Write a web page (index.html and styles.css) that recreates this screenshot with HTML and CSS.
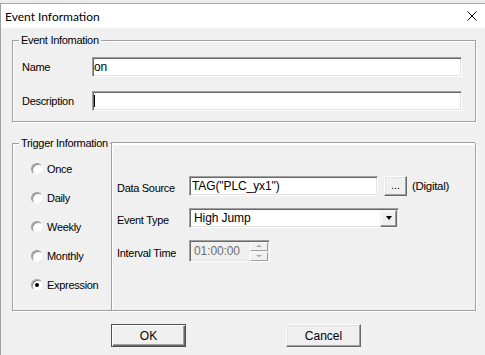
FILE: index.html
```html
<!DOCTYPE html>
<html>
<head>
<meta charset="utf-8">
<link rel="stylesheet" href="styles.css">
</head>
<body>
<div class="topstrip"></div>
<div class="window">
  <div class="titlebar">
    <span class="title">Event Information</span>
    <svg class="close" width="10" height="10" viewBox="0 0 10 10"><path d="M0.5 0.5L9.5 9.5M9.5 0.5L0.5 9.5" stroke="#000" stroke-width="1" fill="none"/></svg>
  </div>
  <div class="client">
    <fieldset class="group group-event">
      <legend>Event Infomation</legend>
      <div class="ev-rows">
        <div class="ev-row"><label>Name</label><div class="edit wide">on</div></div>
        <div class="ev-row"><label>Description</label><div class="edit wide"><span class="caret"></span></div></div>
      </div>
    </fieldset>
    <fieldset class="group group-trigger">
      <legend>Trigger Information</legend>
      <div class="trigger-body">
        <div class="radios">
          <div class="radio-row"><span class="radio"></span>Once</div>
          <div class="radio-row"><span class="radio"></span>Daily</div>
          <div class="radio-row"><span class="radio"></span>Weekly</div>
          <div class="radio-row"><span class="radio"></span>Monthly</div>
          <div class="radio-row"><span class="radio checked"></span>Expression</div>
        </div>
        <div class="panel">
          <div class="p-row">
            <label>Data Source</label>
            <div class="edit source">TAG("PLC_yx1")</div>
            <div class="btn3d dots">...</div>
            <span class="kind">(Digital)</span>
          </div>
          <div class="p-row">
            <label>Event Type</label>
            <div class="edit combo"><span class="combo-text">High Jump</span><span class="drop"><span class="tri"></span></span></div>
          </div>
          <div class="p-row interval">
            <label>Interval Time</label>
            <div class="edit spin disabled"><span class="spin-text">01:00:00</span><span class="spin-btns"><span class="sb up"><span class="tri-up"></span></span><span class="sb down"><span class="tri-down"></span></span></span></div>
          </div>
        </div>
      </div>
    </fieldset>
    <div class="buttons">
      <button class="btn default">OK</button>
      <button class="btn">Cancel</button>
    </div>
  </div>
</div>
</body>
</html>
```

FILE: styles.css
```css
* { box-sizing: border-box; }
html, body { margin: 0; padding: 0; }
body {
  width: 485px;
  height: 355px;
  overflow: hidden;
  background: #f0f0f0;
  font-family: "Liberation Sans", Arial, sans-serif;
  font-size: 11px;
  letter-spacing: -0.3px;
  color: #000;
}
.topstrip { height: 3px; background: #ececec; }
.window {
  width: 485px;
  height: 352px;
  border-top: 1px solid #a9a9a9;
  border-left: 1px solid #a0a0a0;
}
.titlebar {
  height: 24px;
  background: #fff;
  display: flex;
  align-items: center;
  justify-content: space-between;
  padding: 0 8px 0 4px;
  font-family: "Lato", "Noto Sans", sans-serif;
  font-size: 12px;
  letter-spacing: 0;
}
.client {
  height: 327px;
  background: #f0f0f0;
  padding: 6px 0 0 11px;
}
.group {
  margin: 0;
  padding: 0;
  width: 464px;
  border: 1px solid #a0a0a0;
  box-shadow: inset 1px 1px 0 #fff, 1px 1px 0 #fff;
  min-width: 0;
}
.group legend {
  margin-left: 6px;
  padding: 0 2px;
  line-height: 13px;
  background: #f0f0f0;
  position: relative;
  z-index: 1;
}
.group-trigger { margin-top: 15px; }

.ev-rows { padding: 10px 0 10px 9px; }
.ev-row { display: flex; align-items: center; height: 20px; }
.ev-row + .ev-row { margin-top: 14px; }
.ev-row label { width: 70px; }

.edit {
  height: 20px;
  background: #fff;
  border: 1px solid;
  border-color: #a0a0a0 #fff #fff #a0a0a0;
  box-shadow: inset 1px 1px 0 #696969, inset -1px -1px 0 #e3e3e3;
  padding: 0 0 0 2px;
  display: flex;
  align-items: center;
  font-size: 12px;
  letter-spacing: -0.1px;
}
.edit.wide { width: 370px; padding-left: 1px; }
.caret { display: block; width: 1px; height: 12px; background: #000; margin-left: 0; }

.trigger-body { display: flex; margin-top: -8px; height: 168px; }
.radios { width: 98px; padding: 12px 0 0 18px; }
.radio-row { height: 29px; display: flex; align-items: center; }
.radio {
  width: 12px;
  height: 12px;
  border-radius: 50%;
  background: #fff;
  border: 1px solid;
  border-color: #a0a0a0 #f4f4f4 #f4f4f4 #a0a0a0;
  box-shadow: inset 1px 1px 0 #8a8a8a;
  margin-right: 4px;
  display: flex;
  align-items: center;
  justify-content: center;
}
.radio.checked::after {
  content: "";
  width: 4px;
  height: 4px;
  border-radius: 50%;
  background: #000;
}
.panel {
  flex: 1;
  border-top: 1px solid #a0a0a0;
  border-left: 1px solid #a0a0a0;
  box-shadow: inset 1px 1px 0 #fff;
  padding: 33px 0 0 5px;
}
.p-row { display: flex; align-items: center; height: 20px; }
.p-row + .p-row { margin-top: 12px; }
.p-row.interval { height: 22px; }
.p-row label { width: 72px; margin-top: 4px; }
.edit.source { width: 189px; }
.btn3d {
  background: #f0f0f0;
  border: 1px solid;
  border-color: #fff #696969 #696969 #fff;
  box-shadow: inset -1px -1px 0 #a0a0a0, inset 1px 1px 0 #e3e3e3;
}
.dots {
  width: 23px;
  height: 20px;
  margin-left: 6px;
  display: flex;
  align-items: center;
  justify-content: center;
  padding-bottom: 2px;
  letter-spacing: 0;
}
.kind { margin-left: 5px; font-size: 11.5px; }
.edit.combo { width: 210px; padding: 0 1px 0 4px; justify-content: space-between; }
.drop {
  width: 17px;
  height: 17px;
  background: #f0f0f0;
  border: 1px solid;
  border-color: #f0f0f0 #696969 #696969 #f0f0f0;
  box-shadow: inset -1px -1px 0 #a0a0a0, inset 1px 1px 0 #fff;
  display: flex;
  align-items: center;
  justify-content: center;
}
.tri {
  width: 0;
  height: 0;
  border-left: 3.5px solid transparent;
  border-right: 3.5px solid transparent;
  border-top: 4px solid #000;
}
.edit.spin {
  width: 81px;
  height: 22px;
  background: #f0f0f0;
  padding: 0 1px 0 4px;
  justify-content: space-between;
}
.spin-text { color: #6d6d6d; }
.spin-btns { display: flex; flex-direction: column; gap: 1px; width: 18px; }
.sb {
  height: 9px;
  background: #f0f0f0;
  border: 1px solid;
  border-color: #fff #a0a0a0 #a0a0a0 #fff;
  display: flex;
  align-items: center;
  justify-content: center;
}
.tri-up {
  width: 0; height: 0;
  border-left: 3px solid transparent;
  border-right: 3px solid transparent;
  border-bottom: 2px solid #a0a0a0;
}
.tri-down {
  width: 0; height: 0;
  border-left: 3px solid transparent;
  border-right: 3px solid transparent;
  border-top: 2px solid #a0a0a0;
}

.buttons { display: flex; gap: 100px; margin-top: 13px; padding-left: 99px; }
.btn {
  width: 75px;
  height: 23px;
  margin: 0;
  padding: 0;
  font-family: "Liberation Sans", Arial, sans-serif;
  font-size: 12px;
  color: #000;
  background: #f0f0f0;
  border: 1px solid;
  border-color: #fff #696969 #696969 #fff;
  box-shadow: inset -1px -1px 0 #a0a0a0, inset 1px 1px 0 #e3e3e3;
}
.btn.default {
  border-color: #505050;
  box-shadow: inset 1px 1px 0 #fff, inset -1px -1px 0 #696969, inset -2px -2px 0 #a0a0a0;
}
```
